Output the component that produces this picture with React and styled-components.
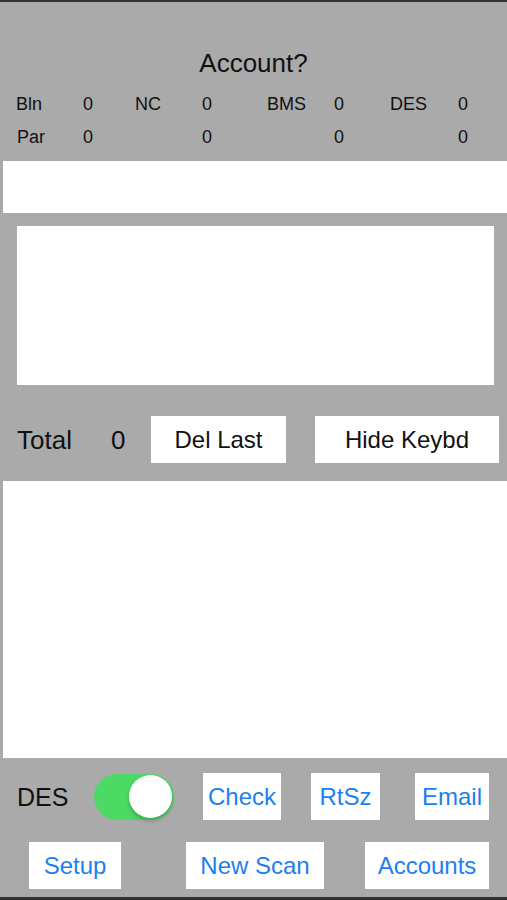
import React from 'react';
import styled, { createGlobalStyle } from 'styled-components';

const GlobalStyle = createGlobalStyle`
  html, body {
    margin: 0;
    padding: 0;
    background: #aaaaaa;
  }
  * {
    box-sizing: border-box;
  }
`;

const stats = [
  { label: 'Bln', value: 0 },
  { label: 'NC', value: 0 },
  { label: 'BMS', value: 0 },
  { label: 'DES', value: 0 },
];

const Screen = styled.div`
  width: 507px;
  height: 900px;
  background: #aaaaaa;
  border-top: 2px solid #333;
  border-bottom: 3px solid #333;
  display: flex;
  flex-direction: column;
  font-family: 'Liberation Sans', Arial, sans-serif;
  color: #111;
  overflow: hidden;
`;

const Title = styled.div`
  margin-top: 46px;
  height: 30px;
  line-height: 30px;
  text-align: center;
  font-size: 26px;
`;

const StatsGrid = styled.div`
  display: grid;
  grid-template-columns: 67px 52px 67px 65px 67px 56px 68px 1fr;
  grid-auto-rows: 22px;
  row-gap: 11px;
  margin-top: 15px;
  padding-left: 16px;
  font-size: 18px;
  line-height: 22px;
`;

const StatLabel = styled.span`
  padding-left: ${(props) => (props.$nudge ? '1px' : '0')};
`;

const InputBar = styled.div`
  margin: 13px 0 0 3px;
  height: 52px;
  background: #fff;
`;

const NoteBox = styled.div`
  margin: 13px 13px 0 17px;
  height: 159px;
  background: #fff;
`;

const Row = styled.div`
  display: flex;
  align-items: center;
  height: ${(props) => props.$h || 47}px;
  margin-top: ${(props) => props.$mt}px;
`;

const BigLabel = styled.span`
  margin-left: ${(props) => props.$ml}px;
  width: ${(props) => props.$w}px;
  font-size: ${(props) => props.$size || 26}px;
  line-height: 30px;
`;

const Button = styled.button`
  margin-left: ${(props) => props.$ml}px;
  width: ${(props) => props.$w}px;
  height: 47px;
  border: none;
  border-radius: 0;
  background: #fff;
  padding: 0;
  font-family: inherit;
  font-size: 24px;
  color: ${(props) => (props.$blue ? '#1c80ee' : '#111')};
  display: flex;
  align-items: center;
  justify-content: center;
  flex: none;
`;

const ListArea = styled.div`
  margin: 18px 0 0 3px;
  height: 277px;
  background: #fff;
`;

const Switch = styled.div`
  width: 80px;
  height: 46px;
  border-radius: 23px;
  background: #4cd964;
  display: flex;
  align-items: center;
  justify-content: flex-end;
  padding-right: 2px;
  flex: none;
`;

const Knob = styled.div`
  width: 43px;
  height: 43px;
  border-radius: 50%;
  background: #fff;
  box-shadow: 0 3px 4px rgba(0, 0, 0, 0.22);
`;

export default function App() {
  return (
    <>
      <GlobalStyle />
      <Screen>
        <Title>Account?</Title>
        <StatsGrid>
          {stats.map((s) => (
            <React.Fragment key={s.label}>
              <StatLabel>{s.label}</StatLabel>
              <span>{s.value}</span>
            </React.Fragment>
          ))}
          <StatLabel $nudge>Par</StatLabel>
          <span>0</span>
          <span />
          <span>0</span>
          <span />
          <span>0</span>
          <span />
          <span>0</span>
        </StatsGrid>
        <InputBar />
        <NoteBox />
        <Row $mt={31}>
          <BigLabel $ml={17} $w={94}>Total</BigLabel>
          <BigLabel $ml={0} $w={40}>0</BigLabel>
          <Button $ml={0} $w={135}>Del Last</Button>
          <Button $ml={29} $w={184}>Hide Keybd</Button>
        </Row>
        <ListArea />
        <Row $mt={15}>
          <BigLabel $ml={17} $w={77} $size={25}>DES</BigLabel>
          <Switch>
            <Knob />
          </Switch>
          <Button $ml={29} $w={78} $blue>Check</Button>
          <Button $ml={30} $w={69} $blue>RtSz</Button>
          <Button $ml={35} $w={74} $blue>Email</Button>
        </Row>
        <Row $mt={22}>
          <Button $ml={29} $w={92} $blue>Setup</Button>
          <Button $ml={65} $w={138} $blue>New Scan</Button>
          <Button $ml={41} $w={124} $blue>Accounts</Button>
        </Row>
      </Screen>
    </>
  );
}
